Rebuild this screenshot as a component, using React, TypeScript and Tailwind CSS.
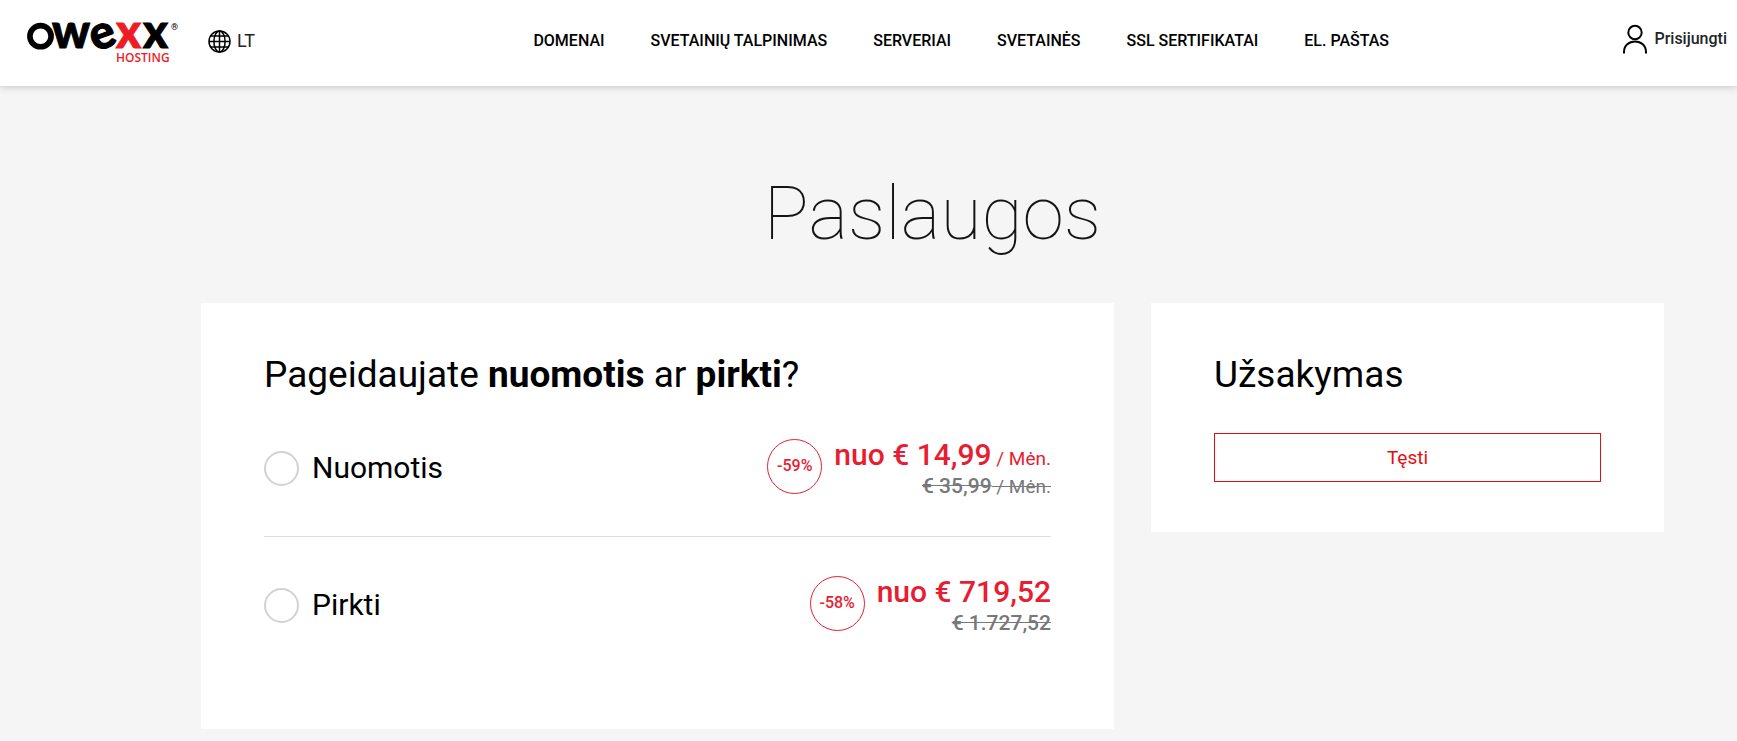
const navItems = ["DOMENAI", "SVETAINIŲ TALPINIMAS", "SERVERIAI", "SVETAINĖS", "SSL SERTIFIKATAI", "EL. PAŠTAS"];

type Plan = {
  id: string;
  label: string;
  discount: string;
  price: string;
  oldPrice: string;
  period?: string;
};

const plans: Plan[] = [
  { id: "rent", label: "Nuomotis", discount: "-59%", price: "nuo € 14,99", oldPrice: "€ 35,99", period: " / Mėn." },
  { id: "buy", label: "Pirkti", discount: "-58%", price: "nuo € 719,52", oldPrice: "€ 1.727,52" },
];

function Logo() {
  return (
    <a href="#" aria-label="Owexx hosting" className="flex items-start">
      <svg className="overflow-visible" width="152" height="46" viewBox="0 0 152 46" aria-hidden="true">
        <circle cx="13.5" cy="16.2" r="10.6" fill="none" stroke="#000" strokeWidth="5.6" />
        <g fontFamily="Lato, sans-serif" fontWeight="900" fontSize="47" strokeWidth="1" fill="#000" stroke="#000">
          <text x="25" y="28">w</text>
          <text x="63" y="28" transform="rotate(-20 76.5 16)">e</text>
          <text x="89" y="28" fill="#ee1c25" stroke="#ee1c25">x</text>
          <text x="116" y="28">x</text>
        </g>
        <text x="89" y="42" fontFamily="'Open Sans', sans-serif" fontWeight="600" fontSize="12" fill="#ee1c25">HOSTING</text>
        <text x="144" y="10" fontFamily="Roboto, sans-serif" fontSize="9" fill="#000">®</text>
      </svg>
    </a>
  );
}

function Globe() {
  return (
    <svg width="23" height="23" viewBox="0 0 23 23" fill="none" stroke="#000" strokeWidth="1.5" aria-hidden="true">
      <circle cx="11.5" cy="11.5" r="10.5" />
      <ellipse cx="11.5" cy="11.5" rx="5.6" ry="10.5" />
      <path d="M11.5 1v21M1 11.5h21M2.6 6h17.8M2.6 17h17.8" />
    </svg>
  );
}

function UserIcon() {
  return (
    <svg width="24" height="30" viewBox="0 0 24 30" fill="none" stroke="#000" strokeWidth="2" aria-hidden="true">
      <circle cx="12" cy="8.5" r="6.7" />
      <path d="M1 29.500V28C1 21.500 6 17.500 12 17.500s11 4 11 10.500v1.500" />
    </svg>
  );
}

function PlanRow({ plan }: { plan: Plan }) {
  return (
    <label htmlFor={plan.id} className="flex h-[60px] cursor-pointer items-center justify-between">
      <span className="flex items-center">
        <input
          id={plan.id}
          type="radio"
          name="plan"
          className="size-[35px] appearance-none rounded-full border-2 border-[#d2d2d2] bg-white checked:border-[10px] checked:border-[#e71d32]"
        />
        <span className="ml-[13px] text-[30px] leading-9">{plan.label}</span>
      </span>
      <span className="flex items-center">
        <span className="mr-3 mb-1 flex size-[55px] items-center justify-center rounded-full border border-[#e71d32] text-base font-medium text-[#e71d32]">
          {plan.discount}
        </span>
        <span className="block pt-0.5 text-right text-[19px] leading-6">
          <span className="block leading-[30px] whitespace-pre text-[#e71d32]">
            <span className="text-[30px] font-medium">{plan.price}</span>
            {plan.period}
          </span>
          <s className="block whitespace-pre text-[#77787b]">
            <span className="text-[21px] font-medium">{plan.oldPrice}</span>
            {plan.period}
          </s>
        </span>
      </span>
    </label>
  );
}

export default function App() {
  return (
    <div className="min-h-screen bg-[#f5f5f5] pb-3 font-['Roboto',sans-serif] text-black">
      <header className="relative flex h-[86px] items-start bg-white pr-[10px] pl-[27px] shadow-[0_0_8px_rgba(0,0,0,0.25)]">
        <div className="flex">
          <div className="pt-5">
            <Logo />
          </div>
          <button type="button" className="mt-[29px] ml-[29px] flex h-6 items-center gap-[6px] text-lg text-[#212529]">
            <Globe />
            LT
          </button>
        </div>
        <nav className="flex flex-1 justify-center gap-[46px] pt-[29px] pl-11 text-base leading-6 font-medium">
          {navItems.map((item) => (
            <a key={item} href="#">{item}</a>
          ))}
        </nav>
        <a href="#" className="flex items-center gap-[7px] pt-6 text-base font-medium text-[#212529]">
          <UserIcon />
          Prisijungti
        </a>
      </header>

      <main className="pr-[73px] pl-[201px]">
        <h1 className="pt-[82px] pb-[45px] text-center text-[75px] leading-[90px] font-thin text-[#141414]">Paslaugos</h1>
        <div className="grid grid-cols-[913fr_513fr] items-start gap-[37px]">
          <section className="bg-white px-[63px] pt-[49px] pb-[94px]">
            <h2 className="text-[37px] leading-[46px]">
              Pageidaujate <b>nuomotis</b> ar <b>pirkti</b>?
            </h2>
            <div className="pt-10 pb-[38px]">
              <PlanRow plan={plans[0]} />
            </div>
            <div className="border-t border-[#dcdcdc] pt-[38px]">
              <PlanRow plan={plans[1]} />
            </div>
          </section>
          <aside className="bg-white px-[63px] pt-[49px] pb-[50px]">
            <h2 className="text-[37px] leading-[46px]">Užsakymas</h2>
            <button type="button" className="mt-[35px] h-[49px] w-full border border-[#e50e0e] pt-0.5 text-[19px] text-[#e50e0e]">
              Tęsti
            </button>
          </aside>
        </div>
      </main>
    </div>
  );
}
